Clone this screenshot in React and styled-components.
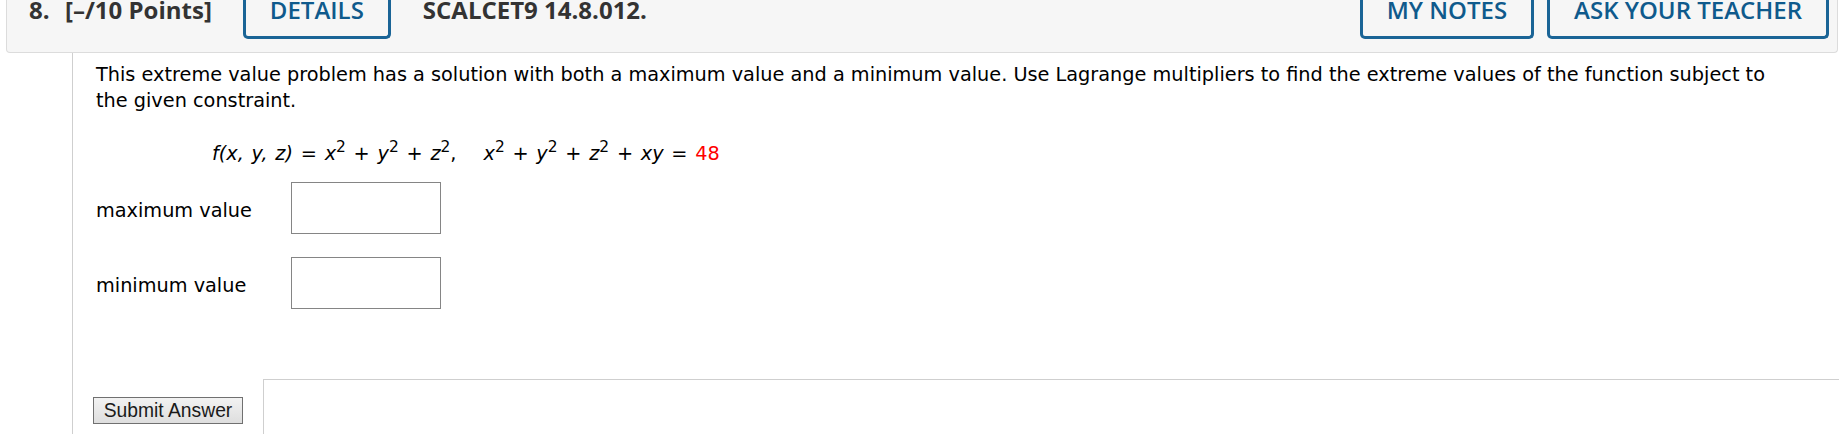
import React from "react";
import styled, { createGlobalStyle } from "styled-components";

const Global = createGlobalStyle`
    html, body {
        margin: 0;
        padding: 0;
        background: #fff;
        overflow: hidden;
    }
    body {
        font-family: "DejaVu Sans", Verdana, sans-serif;
    }
`;

const App = () => {
    return (
        <>
            <Global />
            <Page>
                <Header>
                    <Left>
                        <Num>8.</Num>
                        <Points>[–/10 Points]</Points>
                        <HeadButton>DETAILS</HeadButton>
                        <Code>SCALCET9 14.8.012.</Code>
                    </Left>
                    <Right>
                        <HeadButton>MY NOTES</HeadButton>
                        <HeadButton>ASK YOUR TEACHER</HeadButton>
                    </Right>
                </Header>
                <Body>
                    <Question>
                        <Text>
                            This extreme value problem has a solution with both a maximum value and a minimum value. Use Lagrange multipliers to find the extreme values of the function subject to the given constraint.
                        </Text>
                        <Formula>
                            <i>f</i><i>(x, y, z)</i> = <i>x</i><sup>2</sup> + <i>y</i><sup>2</sup> + <i>z</i><sup>2</sup>,
                            <Gap />
                            <i>x</i><sup>2</sup> + <i>y</i><sup>2</sup> + <i>z</i><sup>2</sup> + <i>xy</i> = <Given>48</Given>
                        </Formula>
                        <Row>
                            <Label>maximum value</Label>
                            <Answer type="text" />
                        </Row>
                        <Row>
                            <Label>minimum value</Label>
                            <Answer type="text" />
                        </Row>
                    </Question>
                    <Footer>
                        <SubmitCell>
                            <Submit type="button">Submit Answer</Submit>
                        </SubmitCell>
                        <Feedback />
                    </Footer>
                </Body>
            </Page>
        </>
    );
};

export default App;

const Page = styled.div`
    width: 1839px;
    height: 434px;
    overflow: hidden;
`;
const Header = styled.div`
    box-sizing: border-box;
    height: 53px;
    margin: 0 1px 0 6px;
    padding: 0 8px 0 22px;
    background: #f6f6f6;
    border: 1px solid #dcdcdc;
    border-top: none;
    border-radius: 0 0 4px 4px;
    display: flex;
    justify-content: space-between;
    align-items: flex-start;
    font-family: "Open Sans", sans-serif;
    font-size: 24px;
    line-height: 19px;
    color: #333;
`;
const Left = styled.div`
    display: flex;
    align-items: flex-start;
`;
const Right = styled.div`
    display: flex;
    align-items: flex-start;
    gap: 13px;
`;
const Num = styled.span`
    font-weight: 700;
    width: 36px;
`;
const Points = styled.span`
    font-weight: 700;
    margin-right: 31px;
`;
const Code = styled.span`
    font-weight: 700;
    margin-left: 32px;
`;
const HeadButton = styled.div`
    box-sizing: border-box;
    height: 39px;
    padding: 0 24px;
    border: 3px solid #1a6496;
    border-top: none;
    border-radius: 0 0 5px 5px;
    color: #0f5a8c;
    font-weight: 600;
    white-space: nowrap;
`;
const Body = styled.div`
    margin-left: 72px;
    border-left: 1px solid #cfcfcf;
    height: 381px;
    display: flex;
    flex-direction: column;
`;
const Question = styled.div`
    padding: 9px 45px 0 23px;
    font-size: 19.3px;
    line-height: 26px;
    color: #000;
`;
const Text = styled.p`
    margin: 0;
`;
const Formula = styled.div`
    margin: 27px 0 0 116px;
    white-space: nowrap;
    word-spacing: 1.6px;
    i {
        font-style: italic;
    }
    sup {
        font-size: 0.8em;
        line-height: 0;
        vertical-align: 0.55em;
    }
`;
const Gap = styled.span`
    display: inline-block;
    width: 27px;
`;
const Given = styled.span`
    color: #f00;
`;
const Row = styled.div`
    display: flex;
    align-items: center;
    margin-top: 15px;
    & + & {
        margin-top: 23px;
    }
`;
const Label = styled.span`
    width: 195px;
    padding-top: 5px;
`;
const Answer = styled.input`
    box-sizing: border-box;
    width: 150px;
    height: 52px;
    border: 1px solid #858585;
    background: #fff;
    margin: 0;
    outline: none;
`;
const Footer = styled.div`
    display: flex;
    margin-top: 70px;
    flex: 1;
`;
const SubmitCell = styled.div`
    width: 190px;
    padding: 18px 0 0 20px;
    box-sizing: border-box;
`;
const Submit = styled.button`
    box-sizing: border-box;
    width: 150px;
    height: 27px;
    padding: 0;
    border: 1px solid #707070;
    border-radius: 0;
    background: linear-gradient(#f2f2f2, #dedede);
    font-family: "Liberation Sans", Arial, sans-serif;
    font-size: 19.3px;
    line-height: 25px;
    color: #1a1a1a;
`;
const Feedback = styled.div`
    flex: 1;
    border-top: 1px solid #cfcfcf;
    border-left: 1px solid #cfcfcf;
`;
